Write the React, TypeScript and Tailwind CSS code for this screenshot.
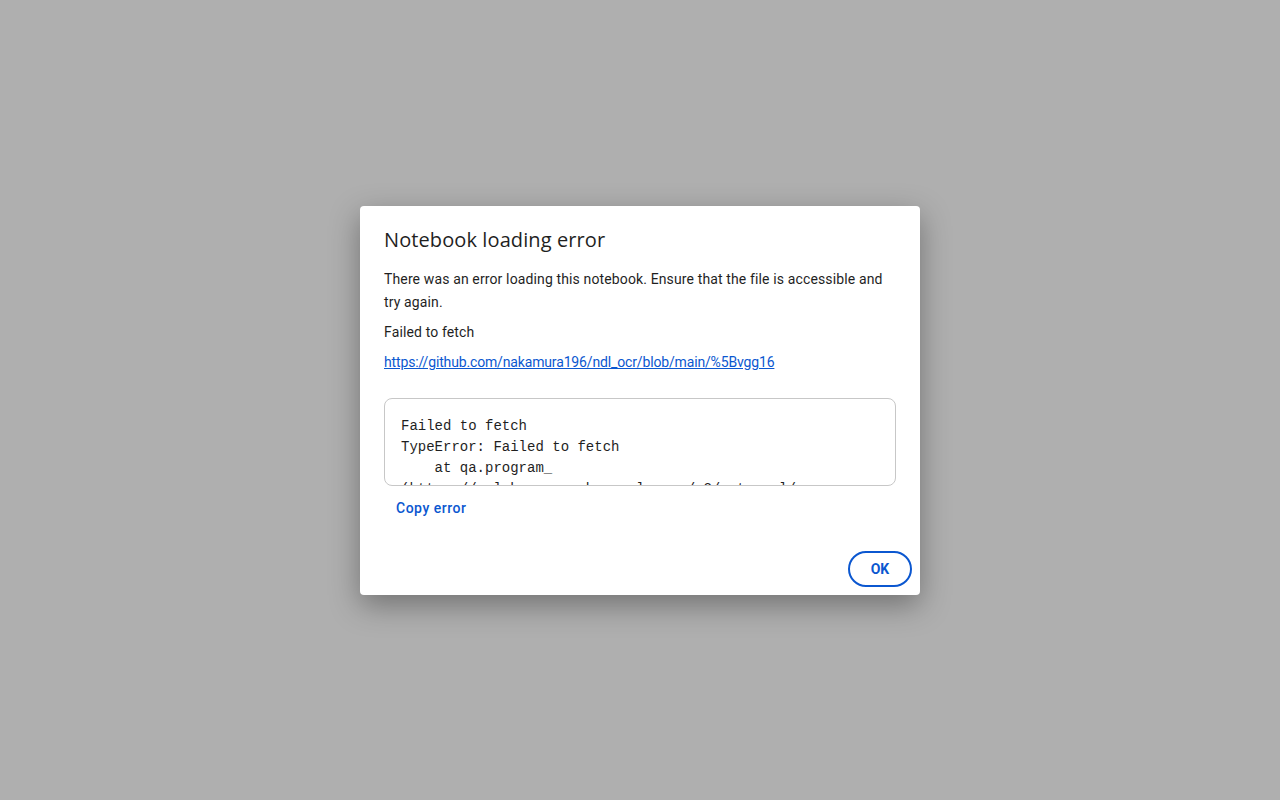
import React from "react";

export default function App() {
  return (
    <div
      className="w-[1280px] h-[800px] bg-[#afafaf] flex items-center justify-center"
      style={{ fontFamily: "Roboto, 'Open Sans', sans-serif" }}
    >
      <div className="w-[560px] h-[389px] bg-white rounded-[4px] shadow-[0_10px_30px_rgba(0,0,0,0.35)] flex flex-col pt-[22px] pb-[8px] pl-[24px] pr-[8px] mt-[1px]">
        <h1 className="text-[20px] leading-[24px] text-[#1f1f1f] font-normal tracking-[0.1px]" style={{ fontFamily: "'Open Sans', Roboto, sans-serif" }}>
          Notebook loading error
        </h1>
        <div className="pr-[16px] mt-[16px] text-[14px] leading-[23px] text-[#1f1f1f] tracking-[0.13px]">
          <p>There was an error loading this notebook. Ensure that the file is accessible and try again.</p>
          <p className="mt-[7px]">Failed to fetch</p>
          <p className="mt-[7px]">
            <a className="text-[#0b57d0] underline tracking-[-0.15px]" href="#">
              https://github.com/nakamura196/ndl_ocr/blob/main/%5Bvgg16
            </a>
          </p>
          <div
            className="mt-[24px] h-[88px] border border-[#c7c7c7] rounded-[8px] overflow-hidden px-[16px] pt-[17px] text-[14px] leading-[21px] text-[#1f1f1f] whitespace-pre tracking-normal"
            style={{ fontFamily: "'Courier New', 'Liberation Mono', monospace" }}
          >
            {"Failed to fetch\nTypeError: Failed to fetch\n    at qa.program_\n(https://colab.research.google.com/v2/external/"}
          </div>
          <div className="mt-[10px] pl-[12px] text-[14px] leading-[24px] text-[#0b57d0] font-medium tracking-[0.5px]">
            Copy error
          </div>
        </div>
        <div className="mt-auto flex justify-end">
          <button className="w-[64px] h-[36px] rounded-full border-2 border-[#0b57d0] text-[#0b57d0] text-[14px] font-bold">
            OK
          </button>
        </div>
      </div>
    </div>
  );
}
